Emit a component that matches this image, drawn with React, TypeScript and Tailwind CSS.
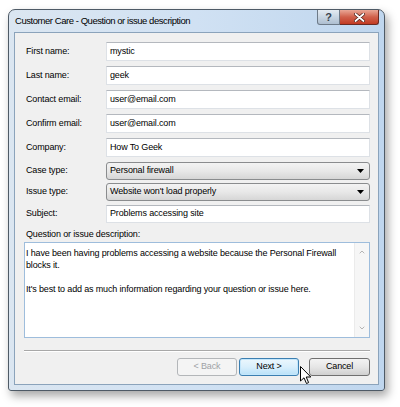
import { ChevronDown } from 'lucide-react';

const txt = 'text-[9px] tracking-[-0.15px]';
const labelCls = `w-[82px] shrink-0 pl-[2px] ${txt} text-black`;
const inputCls = `flex-1 h-[19px] bg-white border border-[#dde1e6] border-t-[#b4b8be] pl-[3px] flex items-center ${txt} text-black`;

function TextRow({ label, value, mt }: { label: string; value: string; mt: string }) {
  return (
    <div className={`flex items-center ${mt}`}>
      <span className={labelCls}>{label}</span>
      <div className={inputCls}>{value}</div>
    </div>
  );
}

function SelectRow({ label, value, mt }: { label: string; value: string; mt: string }) {
  return (
    <div className={`flex items-center ${mt}`}>
      <span className={labelCls}>{label}</span>
      <div className={`flex-1 h-[18px] rounded-[3px] border border-[#8a8c8e] bg-gradient-to-b from-[#f3f3f3] via-[#e8e8e8] to-[#d6d6d6] flex items-center pl-[3px] pr-[5px] ${txt} text-black`}>
        <span className="flex-1">{value}</span>
        <svg width="7" height="4" viewBox="0 0 7 4">
          <path d="M0 0 H7 L3.5 4 Z" fill="#000" />
        </svg>
      </div>
    </div>
  );
}

export default function App() {
  return (
    <div className="relative w-[400px] h-[407px] bg-white pl-2 pt-[9px] font-['Liberation_Sans',Arial,sans-serif]">
      {/* Window frame */}
      <div className="w-[377px] h-[382px] flex flex-col rounded-t-[7px] rounded-b-[3px] border border-[#4e5a66] bg-gradient-to-r from-[#dbe6f1] via-[#d0e1f3] to-[#bfd6ee] shadow-[3px_5px_10px_rgba(0,0,0,0.35)]">
        {/* Title bar */}
        <div className="h-[22px] flex items-start shrink-0">
          <span className="pl-[6px] pt-[6px] text-[9.5px] tracking-[-0.45px] text-black leading-none">
            Customer Care - Question or issue description
          </span>
          <div className="ml-auto mr-[5px] flex">
            <div className="w-[23px] h-[15px] rounded-bl-[3px] border border-t-0 border-[#6d7a88] bg-gradient-to-b from-[#e4ebf2] via-[#c8d5e2] to-[#aebfd1] flex items-center justify-center">
              <span className="text-[11px] font-bold leading-none text-[#36414c]">?</span>
            </div>
            <div className="w-[39px] h-[15px] rounded-br-[3px] border border-t-0 border-l-0 border-[#6b2a22] bg-gradient-to-b from-[#e9a796] via-[#d0604b] to-[#c23a22] flex items-center justify-center">
              <svg width="11" height="9" viewBox="0 0 11 9">
                <path d="M1.5 1 L9.5 8 M9.5 1 L1.5 8" stroke="#4a1b14" strokeWidth="3.2" strokeLinecap="round" />
                <path d="M1.5 1 L9.5 8 M9.5 1 L1.5 8" stroke="#fff" strokeWidth="1.8" strokeLinecap="round" />
              </svg>
            </div>
          </div>
        </div>

        {/* Client area */}
        <div className="flex-1 mx-[5px] mb-[5px] border border-[#8ba3bb] bg-[#f0f0f0] flex flex-col pl-[9px] pr-[8px] pt-[9px] pb-[8px]">
          <TextRow label="First name:" value="mystic" mt="" />
          <TextRow label="Last name:" value="geek" mt="mt-[5px]" />
          <TextRow label="Contact email:" value="user@email.com" mt="mt-[5px]" />
          <TextRow label="Confirm email:" value="user@email.com" mt="mt-[5px]" />
          <TextRow label="Company:" value="How To Geek" mt="mt-[5px]" />
          <SelectRow label="Case type:" value="Personal firewall" mt="mt-[5px]" />
          <SelectRow label="Issue type:" value="Website won't load properly" mt="mt-[3px]" />
          <div className="flex items-center mt-[4px]">
            <span className={labelCls}>Subject:</span>
            <div className={`flex-1 h-[18px] bg-white border border-[#dde1e6] border-t-[#b4b8be] pl-[3px] flex items-center ${txt} text-black`}>
              Problems accessing site
            </div>
          </div>

          <span className={`mt-[5px] pl-[2px] ${txt} leading-[12px] text-black`}>Question or issue description:</span>

          <div className="mt-[2px] h-[96px] flex bg-white border border-[#9ebddc]">
            <div className={`flex-1 pl-[1px] pt-[4px] ${txt} leading-[12px] text-black whitespace-nowrap`}>
              <p>I have been having problems accessing a website because the Personal Firewall</p>
              <p>blocks it.</p>
              <p className="mt-[12px]">It's best to add as much information regarding your question or issue here.</p>
            </div>
            <div className="w-[15px] bg-[#f6f6f6] border-l border-[#ebebeb] flex flex-col items-center justify-between py-[5px] text-[#b4b4b4]">
              <ChevronDown size={8} strokeWidth={3} className="rotate-180" />
              <ChevronDown size={8} strokeWidth={3} />
            </div>
          </div>

          {/* Separator */}
          <div className="mt-[12px] border-t border-[#a8a8a8] border-b border-b-white" />

          {/* Buttons */}
          <div className="mt-auto flex justify-end gap-[2px]">
            <div className={`w-[60px] h-[18px] rounded-[3px] border border-[#b3b6b9] bg-[#f4f4f4] flex items-center justify-center ${txt} text-[#9ea2a6]`}>
              &lt; Back
            </div>
            <div className={`w-[60px] h-[18px] rounded-[3px] border border-[#3c7fb1] bg-gradient-to-b from-[#ecf7fd] via-[#d9effc] to-[#b9e1f8] shadow-[inset_0_0_0_1px_#c3e6fb] flex items-center justify-center ${txt} text-black`}>
              Next &gt;
            </div>
            <div className={`ml-[8px] w-[61px] h-[18px] rounded-[3px] border border-[#707070] bg-gradient-to-b from-[#f3f3f3] via-[#e6e6e6] to-[#d0d0d0] flex items-center justify-center ${txt} text-black`}>
              Cancel
            </div>
          </div>
        </div>
      </div>

      {/* Mouse pointer */}
      <svg className="absolute left-[300px] top-[366px]" width="12" height="20" viewBox="0 0 12 20">
        <path d="M0.5 0.5 L0.5 15 L4 11.8 L6.5 17.5 L8.6 16.6 L6.2 11 L10.8 11 Z" fill="#fff" stroke="#000" strokeWidth="1" strokeLinejoin="round" />
      </svg>
    </div>
  );
}
